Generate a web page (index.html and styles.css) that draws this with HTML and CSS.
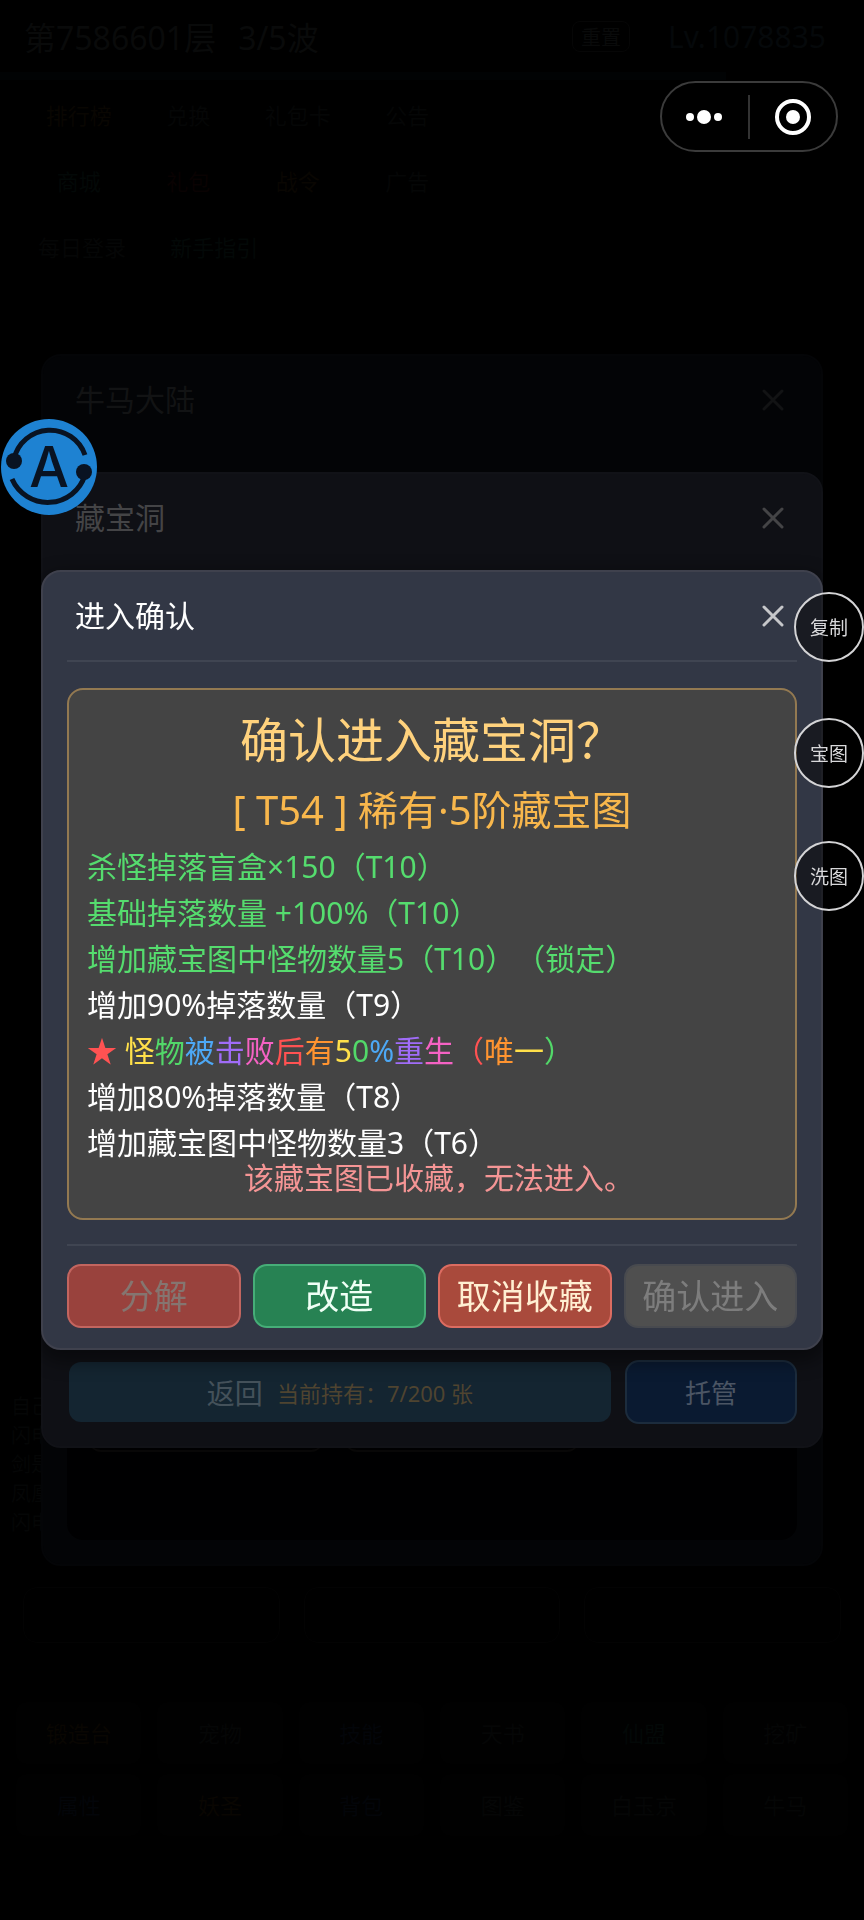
FILE: index.html
```html
<!DOCTYPE html>
<html lang="zh-CN">
<head>
<meta charset="utf-8">
<meta name="viewport" content="width=device-width, initial-scale=1">
<title>进入确认</title>
<link rel="stylesheet" href="styles.css">
</head>
<body>
<main class="game">
  <header class="status">
    <span class="floor">第7586601层</span>
    <span class="wave">3/5波</span>
    <span class="reset">重置</span>
    <span class="level">Lv.1078835</span>
  </header>
  <div class="progress"></div>
  <nav class="chips">
    <span class="gold">排行榜</span><span>兑换</span><span>礼包卡</span><span>公告</span>
    <span class="teal">商城</span><span class="red">礼包</span><span class="gold">战令</span><span>广告</span>
  </nav>
  <nav class="chips wide"><span>每日登录</span><span class="teal">新手指引</span></nav>
  <ul class="log"><li>自己</li><li>闪电</li><li>剑是</li><li>凤凰</li><li>闪电</li></ul>
  <section class="slots"><div></div><div></div><div></div></section>
  <nav class="dock">
    <span class="gold">锻造台</span><span>宠物</span><span class="blue">技能</span><span>天书</span><span class="teal">仙盟</span><span>挖矿</span>
    <span class="blue">属性</span><span class="gold">妖圣</span><span class="blue">背包</span><span>图鉴</span><span>白玉京</span><span>牛马</span>
  </nav>
</main>

<div class="overlay">
  <section class="modal far" aria-hidden="true">
    <header class="modal-head">
      <h2>牛马大陆</h2>
      <svg class="cross" viewBox="0 0 22 22"><path d="M2 2 20 20M20 2 2 20"/></svg>
    </header>
    <div class="far-body"><span></span><span></span></div>
  </section>
</div>

<div class="overlay">
  <section class="modal mid" aria-hidden="true">
    <header class="modal-head">
      <h2>藏宝洞</h2>
      <svg class="cross" viewBox="0 0 22 22"><path d="M2 2 20 20M20 2 2 20"/></svg>
    </header>
    <div class="mid-body"></div>
    <footer class="mid-foot">
      <button class="back" type="button">返回<small>当前持有：7/200 张</small></button>
      <button class="host" type="button">托管</button>
    </footer>
  </section>
</div>

<div class="overlay">
  <section class="modal near" role="dialog" aria-labelledby="dialog-title">
    <header class="modal-head">
      <h2 id="dialog-title">进入确认</h2>
      <button class="close" type="button" aria-label="关闭">
        <svg class="cross" viewBox="0 0 22 22"><path d="M2 2 20 20M20 2 2 20"/></svg>
      </button>
    </header>
    <div class="card">
      <h3>确认进入藏宝洞？</h3>
      <p class="map">[ T54 ] 稀有·5阶藏宝图</p>
      <ul class="affixes">
        <li class="locked">杀怪掉落盲盒×150（T10）</li>
        <li class="locked">基础掉落数量 +100%（T10）</li>
        <li class="locked">增加藏宝图中怪物数量5（T10）（锁定）</li>
        <li>增加90%掉落数量（T9）</li>
        <li><span class="c1">★</span> <span class="c3">怪</span><span class="c4">物</span><span class="c5">被</span><span class="c6">击</span><span class="c7">败</span><span class="c1">后</span><span class="c2">有</span><span class="c3">5</span><span class="c4">0</span><span class="c5">%</span><span class="c6">重</span><span class="c7">生</span><span class="c1">（</span><span class="c2">唯</span><span class="c3">一</span><span class="c4">）</span></li>
        <li>增加80%掉落数量（T8）</li>
        <li>增加藏宝图中怪物数量3（T6）</li>
      </ul>
      <p class="warning">该藏宝图已收藏，无法进入。</p>
    </div>
    <footer class="actions">
      <button class="salvage" type="button" disabled>分解</button>
      <button class="rework" type="button">改造</button>
      <button class="unfav" type="button">取消收藏</button>
      <button class="enter" type="button" disabled>确认进入</button>
    </footer>
  </section>
</div>

<div class="capsule">
  <button type="button" aria-label="更多">
    <svg viewBox="0 0 40 40"><circle cx="5" cy="20" r="4"/><circle cx="19" cy="20" r="7"/><circle cx="33" cy="20" r="4"/></svg>
  </button>
  <button type="button" aria-label="退出">
    <svg viewBox="0 0 40 40"><circle class="ring" cx="20" cy="20" r="16"/><circle cx="20" cy="20" r="7"/></svg>
  </button>
</div>

<button class="assist" type="button">
  <svg viewBox="0 0 96 96">
    <path d="M13 40A37 37 0 0 1 84 36M11 60A39 39 0 0 0 84 56"/>
    <circle cx="13" cy="42" r="8"/><circle cx="83" cy="53" r="8"/>
  </svg>
  <span>A</span>
</button>

<button class="float copy" type="button">复制</button>
<button class="float chart" type="button">宝图</button>
<button class="float wash" type="button">洗图</button>
</body>
</html>
```
FILE: styles.css
```css
* { box-sizing: border-box; }

body {
  margin: 0;
  background: #000;
  color: #fff;
  font-family: "Noto Sans", "Noto Sans CJK SC", sans-serif;
  text-spacing-trim: space-all;
}

h2, h3, p, ul { margin: 0; padding: 0; font-weight: 400; }
ul { list-style: none; }
button { margin: 0; padding: 0; font: inherit; color: inherit; background: none; border: 0; }

/* Game screen, dimmed behind the dialogs */
.game {
  min-height: 100vh;
  display: flex;
  flex-direction: column;
  padding-bottom: 84px;
  color: #050606;
}
.status {
  height: 72px;
  display: flex;
  align-items: center;
  gap: 22px;
  padding: 0 38px 0 24px;
  font-size: 32px;
  color: #090a0a;
}
.reset {
  margin-left: auto;
  padding: 0 8px;
  border: 1px solid #060606;
  border-radius: 8px;
  font-size: 20px;
}
.level { margin-left: 16px; font-size: 30px; color: #05080a; }
.progress { width: 84%; height: 8px; background: #010304; }
.chips {
  width: 53%;
  display: grid;
  grid-template-columns: repeat(4, 1fr);
  gap: 20px 8px;
  padding: 12px 0 0 28px;
  font-size: 22px;
  line-height: 46px;
  text-align: center;
}
.chips.wide { width: 32%; grid-template-columns: repeat(2, 1fr); padding: 20px 0 0 20px; }
.gold { color: #090602; }
.teal { color: #030807; }
.red { color: #090202; }
.blue { color: #030509; }
.log { margin-top: auto; padding-left: 11px; font-size: 20px; line-height: 29px; }
.slots { display: grid; grid-template-columns: repeat(3, 1fr); gap: 24px; padding: 50px 23px 0; }
.slots div { height: 56px; border: 1px solid #030303; border-radius: 14px; }
.dock {
  display: grid;
  grid-template-columns: repeat(6, 1fr);
  gap: 10px 16px;
  padding: 59px 16px 0;
  font-size: 22px;
  line-height: 62px;
  text-align: center;
}
.dock span { background: #010101; border-radius: 10px; }

/* Stacked dialogs */
.overlay {
  position: fixed;
  inset: 0;
  display: flex;
  align-items: center;
  padding: 0 41px;
}
.modal {
  width: 100%;
  padding: 0 24px;
  border: 2px solid transparent;
  border-radius: 20px;
}
.modal-head {
  height: 90px;
  display: flex;
  align-items: center;
  justify-content: space-between;
  padding: 0 13px 0 8px;
  border-bottom: 2px solid transparent;
}
.modal-head h2 { font-size: 30px; line-height: 44px; }
.cross {
  display: block;
  width: 22px;
  height: 22px;
  fill: none;
  stroke: currentColor;
  stroke-width: 3;
  stroke-linecap: round;
}

.far { background: #030406; border-color: #040507; padding-bottom: 24px; color: #121314; }
.far-body {
  min-height: 1094px;
  display: flex;
  align-items: flex-end;
  gap: 22px;
  padding: 0 218px 88px 22px;
  background: linear-gradient(#030406 90%, #000001 90%);
  border-radius: 0 0 16px 16px;
}
.far-body span { flex: 1; height: 30px; border-bottom: 2px solid #080707; border-radius: 12px; }

.mid { background: #0f1015; border-color: #111217; padding-bottom: 22px; color: #444446; }
.mid-body { min-height: 796px; }
.mid-foot { display: grid; grid-template-columns: 546fr 172fr; gap: 12px; }
.mid-foot button { height: 64px; border-radius: 14px; border: 2px solid transparent; background-clip: padding-box; }
.back {
  display: flex;
  align-items: center;
  justify-content: center;
  gap: 14px;
  font-size: 28px;
  color: #44515a;
  background-color: #142531;
}
.back small { font-size: 22px; color: #4f4430; }
.mid-foot .host { font-size: 26px; color: #4b5564; background: #0a1a31; border-color: #1c2c3d; }

.near {
  padding-bottom: 20px;
  background: #323745;
  border-color: #3f414d;
  box-shadow: 0 8px 18px 4px rgba(0, 0, 0, .4);
}
.near .modal-head { border-color: #404552; }
.close { color: #c6c7ca; }
.card {
  margin: 26px 0 24px;
  padding: 18px 18px 28px;
  background: #444;
  border: 2px solid #937951;
  border-radius: 16px;
}
.card h3 { font-size: 48px; line-height: 64px; text-align: center; color: #ffd27d; }
.map { margin-top: 8px; font-size: 40px; line-height: 60px; text-align: center; color: #f8b74c; }
.affixes { margin-top: 4px; font-size: 30px; line-height: 46px; }
.locked { color: #55dc6e; }
.c1 { color: #ff5252; }
.c2 { color: #ff9430; }
.c3 { color: #ffe04a; }
.c4 { color: #52d869; }
.c5 { color: #4da8f5; }
.c6 { color: #a06cf8; }
.c7 { color: #f562c4; }
.warning { padding-left: 14px; font-size: 30px; line-height: 24px; text-align: center; color: #f59595; }

.actions {
  display: grid;
  grid-template-columns: repeat(4, 1fr);
  gap: 12px;
  padding-top: 18px;
  border-top: 2px solid #404552;
}
.actions button {
  height: 64px;
  border: 2px solid;
  border-radius: 14px;
  font-size: 34px;
  line-height: 58px;
  white-space: nowrap;
}
.actions .salvage { background: #99423d; border-color: #c3655f; color: #857570; }
.actions .rework { background: #278253; border-color: #46ae78; color: #effff5; }
.actions .unfav { background: #a94a3c; border-color: #dc6c61; color: #ffefd2; }
.actions .enter { background: #4f4f4f; border-color: #484a4f; color: #7d7d7d; }

/* Controls that float over everything */
.capsule {
  position: fixed;
  top: 81px;
  right: 26px;
  width: 178px;
  height: 71px;
  display: flex;
  align-items: center;
  border: 2px solid #3b3b3b;
  border-radius: 36px;
  background: #000;
}
.capsule button { flex: 1; height: 44px; display: flex; align-items: center; justify-content: center; }
.capsule button + button { border-left: 2px solid #333; }
.capsule svg { width: 40px; height: 40px; fill: #fff; }
.capsule .ring { fill: none; stroke: #fff; stroke-width: 4; }

.assist {
  position: fixed;
  top: 419px;
  left: 1px;
  width: 96px;
  height: 96px;
  display: grid;
  place-items: center;
  border-radius: 50%;
  background: #1e82d2;
  color: #091322;
}
.assist svg, .assist span { grid-area: 1 / 1; }
.assist svg { width: 96px; height: 96px; fill: currentColor; }
.assist path { fill: none; stroke: currentColor; stroke-width: 5; }
.assist span { font: 500 56px/96px Inter, sans-serif; }

.float {
  position: fixed;
  right: 0;
  width: 70px;
  height: 70px;
  border: 2px solid #d4d4d6;
  border-radius: 50%;
  background: rgba(0, 0, 0, .5);
  font-size: 19px;
  color: #d8d8da;
}
.copy { top: 592px; }
.chart { top: 718px; }
.wash { top: 841px; }
```
